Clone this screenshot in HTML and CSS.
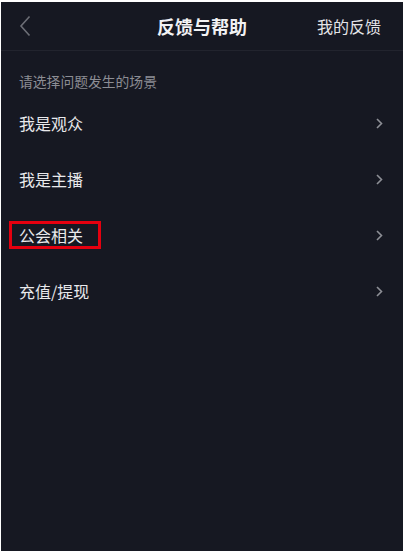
FILE: index.html
```html
<!DOCTYPE html>
<html lang="zh">
<head>
<meta charset="utf-8">
<link rel="stylesheet" href="styles.css">
</head>
<body>
<div class="screen">
  <header class="nav">
    <span class="back"><svg width="12" height="22" viewBox="0 0 12 22"><path d="M10.5 1.5 L2 11 L10.5 20.5" fill="none" stroke="#6c6e76" stroke-width="1.6"/></svg></span>
    <h1 class="title">反馈与帮助</h1>
    <span class="mine">我的反馈</span>
  </header>
  <p class="hint">请选择问题发生的场景</p>
  <ul class="list">
    <li class="row"><span class="label">我是观众</span><svg class="chev" width="7" height="11" viewBox="0 0 7 11"><path d="M1 1 L5.5 5.5 L1 10" fill="none" stroke="#8d8f96" stroke-width="1.6"/></svg></li>
    <li class="row"><span class="label">我是主播</span><svg class="chev" width="7" height="11" viewBox="0 0 7 11"><path d="M1 1 L5.5 5.5 L1 10" fill="none" stroke="#8d8f96" stroke-width="1.6"/></svg></li>
    <li class="row"><span class="label marked">公会相关</span><svg class="chev" width="7" height="11" viewBox="0 0 7 11"><path d="M1 1 L5.5 5.5 L1 10" fill="none" stroke="#8d8f96" stroke-width="1.6"/></svg></li>
    <li class="row"><span class="label">充值/提现</span><svg class="chev" width="7" height="11" viewBox="0 0 7 11"><path d="M1 1 L5.5 5.5 L1 10" fill="none" stroke="#8d8f96" stroke-width="1.6"/></svg></li>
  </ul>
</div>
</body>
</html>
```
FILE: styles.css
```css
html, body {
  margin: 0;
  padding: 0;
  background: #ffffff;
}
body {
  padding: 2px 1px 0 1px;
  height: 551px;
  box-sizing: border-box;
  font-family: "Noto Sans CJK SC", "Noto Sans", sans-serif;
}
.screen {
  background: #161822;
  height: 549px;
  color: #e9e9ec;
}
.nav {
  height: 48px;
  border-bottom: 1px solid #22242e;
  display: flex;
  align-items: center;
  justify-content: space-between;
  padding: 0 22px 0 18px;
  position: relative;
}
.back {
  display: flex;
  width: 12px;
  height: 22px;
}
.title {
  position: absolute;
  left: 0;
  right: 0;
  text-align: center;
  margin: 0;
  font-size: 18px;
  font-weight: 700;
  color: #f2f2f4;
  pointer-events: none;
}
.mine {
  font-size: 16px;
  color: #e4e4e8;
}
.hint {
  margin: 0;
  padding: 19px 18px 0 18px;
  height: 22px;
  line-height: 22px;
  font-size: 13.8px;
  color: #8c8d94;
}
.list {
  list-style: none;
  margin: 0;
  padding: 3px 0 0 0;
}
.row {
  height: 56px;
  display: flex;
  align-items: center;
  justify-content: space-between;
  padding: 0 20px 0 18px;
}
.label {
  font-size: 16px;
  color: #e9e9ec;
  line-height: 22px;
}
.marked {
  outline: 3px solid #e5000f;
  outline-offset: 0;
  padding: 0 15px 0 7px;
  margin-left: -7px;
}
.chev {
  display: block;
}
```
